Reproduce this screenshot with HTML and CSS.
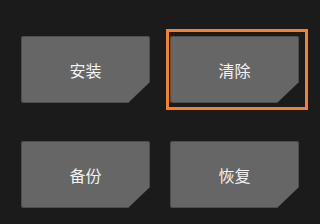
FILE: index.html
```html
<!DOCTYPE html>
<html lang="zh-CN">
<head>
    <meta charset="UTF-8">
    <meta name="viewport" content="width=device-width, initial-scale=1.0">
    <title>菜单</title>
    <link rel="stylesheet" href="styles.css">
</head>
<body>
    <div class="menu">
        <div class="cell">
            <button class="tile">安装</button>
        </div>
        <div class="cell focused">
            <button class="tile">清除</button>
        </div>
        <div class="cell">
            <button class="tile">备份</button>
        </div>
        <div class="cell">
            <button class="tile">恢复</button>
        </div>
    </div>
</body>
</html>
```

FILE: styles.css
```css
body, html {
    margin: 0;
    padding: 0;
    height: 100%;
    overflow: hidden;
    background: #1b1b1b;
}

.menu {
    display: grid;
    grid-template-columns: 1fr 1fr;
    grid-auto-rows: 67px;
    column-gap: 20px;
    row-gap: 38px;
    padding: 36px 21px 0;
}

.cell {
    position: relative;
}

/* orange focus ring, a bit wider on the right */
.focused::after {
    content: "";
    position: absolute;
    top: -7px;
    left: -4px;
    right: -9px;
    bottom: -7px;
    border: 3px solid #f7812a;
}

.tile {
    display: flex;
    align-items: center;
    justify-content: center;
    width: 100%;
    height: 100%;
    padding: 0;
    border: none;
    border-radius: 3px;
    background: #666666;
    box-shadow: inset 0 0 0 1px #4e4e4e;
    color: #f2f2f2;
    font-family: "Noto Sans CJK SC", "Noto Sans", sans-serif;
    font-size: 16px;
    font-weight: 400;
    clip-path: polygon(0 0, 100% 0, 100% calc(100% - 21px), calc(100% - 22px) 100%, 0 100%);
}
```
